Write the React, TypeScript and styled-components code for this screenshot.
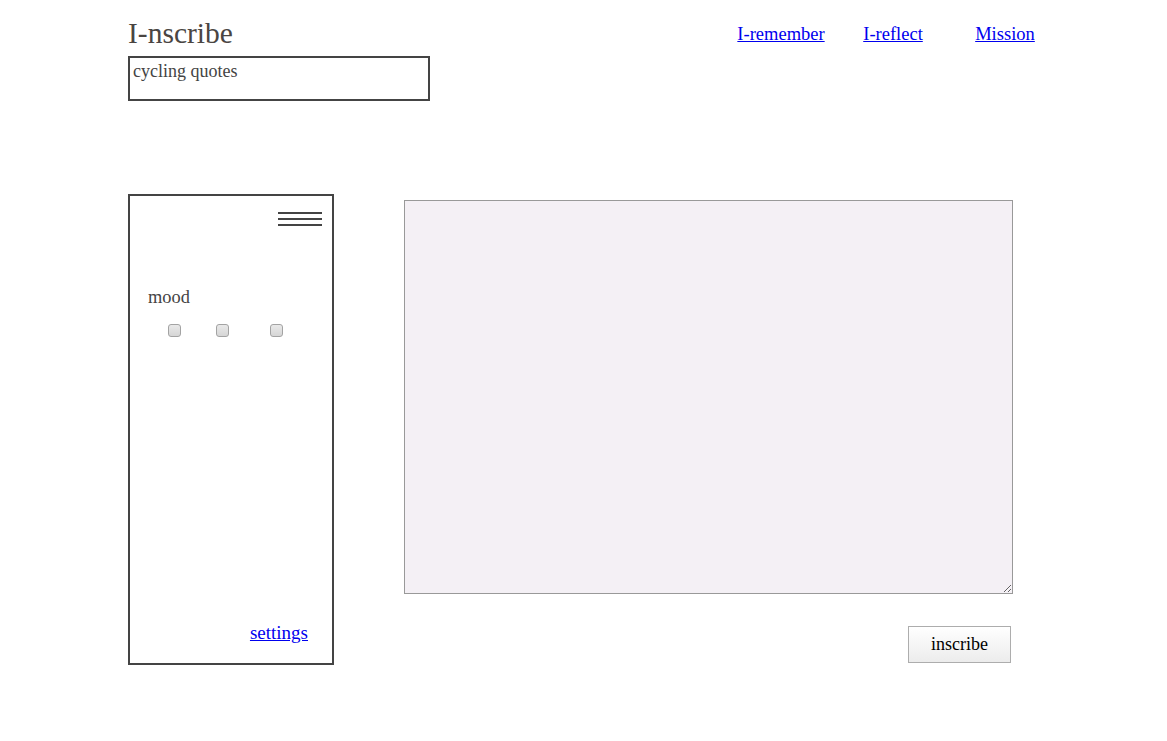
import styled, { createGlobalStyle } from 'styled-components';

const GlobalStyle = createGlobalStyle`
  html, body {
    margin: 0;
    padding: 0;
    background: #fff;
  }
  body {
    font-family: "Liberation Serif", "Times New Roman", serif;
    color: #444;
  }
`;

const Page = styled.div`
  width: 933px;
  padding-left: 128px;
`;

const Header = styled.header`
  display: flex;
  justify-content: space-between;
  align-items: flex-start;
  padding-top: 16px;
`;

const Title = styled.h1`
  margin: 0;
  font-size: 29.5px;
  font-weight: normal;
  line-height: 34px;
  color: #4a4542;
`;

const Nav = styled.nav`
  display: grid;
  grid-template-columns: repeat(3, 112px);
  justify-items: center;
  margin-top: 8px;
`;

const NavLink = styled.a`
  font-size: 18.5px;
  color: #0000ee;
  text-decoration: underline;
`;

const QuoteBox = styled.div`
  box-sizing: border-box;
  width: 302px;
  height: 45px;
  margin-top: 6px;
  padding: 3px 3px 0;
  border: 2px solid #444;
  font-size: 18px;
  color: #444;
`;

const Main = styled.main`
  display: flex;
  align-items: flex-start;
  gap: 70px;
  margin-top: 93px;
`;

const Sidebar = styled.aside`
  box-sizing: border-box;
  width: 206px;
  height: 471px;
  border: 2px solid #444;
  display: flex;
  flex-direction: column;
`;

const Burger = styled.div`
  align-self: flex-end;
  display: flex;
  flex-direction: column;
  gap: 4px;
  width: 44px;
  margin: 16px 10px 0 0;
  span {
    display: block;
    height: 2px;
    background: #444;
  }
`;

const MoodLabel = styled.div`
  margin: 61px 0 0 18px;
  font-size: 18.4px;
  color: #444;
`;

const MoodRow = styled.div`
  display: flex;
  margin-top: 16px;
`;

const MoodCheck = styled.input<{ $offset: number }>`
  appearance: none;
  -webkit-appearance: none;
  box-sizing: border-box;
  width: 13px;
  height: 13px;
  margin: 0 0 0 ${p => p.$offset}px;
  border: 1px solid #a3a3a3;
  border-radius: 3px;
  background: linear-gradient(#e9e9e9, #d6d6d6);
`;

const SettingsLink = styled.a`
  margin: auto 24px 19px 0;
  align-self: flex-end;
  font-size: 19px;
  color: #0000ee;
  text-decoration: underline;
`;

const Editor = styled.section`
  display: flex;
  flex-direction: column;
  align-items: flex-end;
  padding-top: 6px;
`;

const Entry = styled.textarea`
  box-sizing: border-box;
  width: 609px;
  height: 394px;
  margin: 0;
  border: 1px solid #999;
  background: #f4f0f5;
  font-family: "Liberation Serif", serif;
  font-size: 18px;
  outline: none;
`;

const InscribeButton = styled.button`
  box-sizing: border-box;
  width: 103px;
  height: 37px;
  margin: 32px 2px 0 0;
  border: 1px solid #adadad;
  background: linear-gradient(#ffffff, #ececec);
  font-family: "Liberation Serif", serif;
  font-size: 18px;
  color: #000;
  cursor: pointer;
`;

export default function App() {
  return (
    <>
      <GlobalStyle />
      <Page>
        <Header>
          <Title>I-nscribe</Title>
          <Nav>
            <NavLink href="#">I-remember</NavLink>
            <NavLink href="#">I-reflect</NavLink>
            <NavLink href="#">Mission</NavLink>
          </Nav>
        </Header>
        <QuoteBox>cycling quotes</QuoteBox>
        <Main>
          <Sidebar>
            <Burger>
              <span />
              <span />
              <span />
            </Burger>
            <MoodLabel>mood</MoodLabel>
            <MoodRow>
              <MoodCheck type="checkbox" $offset={38} />
              <MoodCheck type="checkbox" $offset={35} />
              <MoodCheck type="checkbox" $offset={41} />
            </MoodRow>
            <SettingsLink href="#">settings</SettingsLink>
          </Sidebar>
          <Editor>
            <Entry />
            <InscribeButton>inscribe</InscribeButton>
          </Editor>
        </Main>
      </Page>
    </>
  );
}
